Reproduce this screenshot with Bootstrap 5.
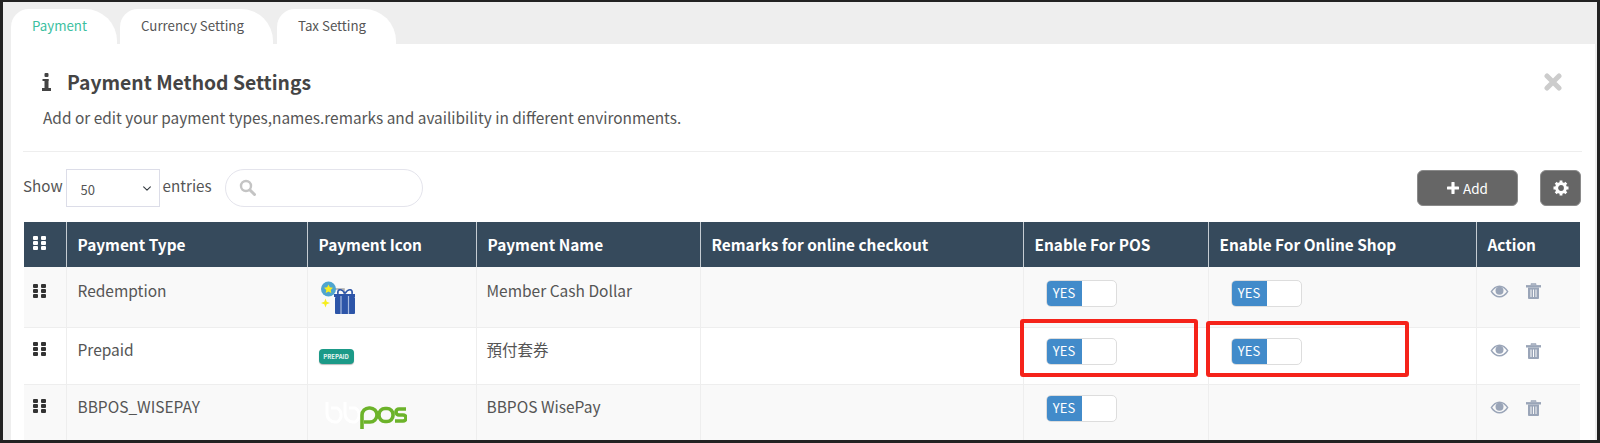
<!doctype html>
<html lang="en">
<head>
<meta charset="utf-8">
<title>Payment Method Settings</title>
<link rel="stylesheet" href="https://cdn.jsdelivr.net/npm/bootstrap@5.3.0/dist/css/bootstrap.min.css">
<style>
html,body{height:443px;overflow:hidden}
body{font-family:"Noto Sans CJK TC","Noto Sans",sans-serif;color:#555;background:#222;font-size:15px}
.shot{position:relative;height:443px;width:1600px;border-style:solid;border-color:#222;border-width:2px 3px 3px 3px;background:#eee;padding:0 2px 0 8px}
.tabstrip{height:42px;padding-top:7px;gap:3px;flex-wrap:nowrap}
.tabstrip .nav-link{height:35px;background:#fff;color:#555;font-size:13.3px;line-height:20px;padding:7px 0 0 21px;border-radius:18px 32px 0 0}
.tabstrip .nav-link.active{color:#3cbf9f}
.tab-a{width:106px}.tab-b{width:153px;margin-left:0}.tab-c{width:119px;margin-left:1px}
.panel-body{background:#fff;height:396px;padding:0 13px;overflow:hidden}
.head-block{padding:24px 0 0 19px;position:relative}
.head-title{font-size:19.3px;line-height:28px;font-weight:700;color:#444;margin:0 0 0 24px}
.head-desc{font-size:15.4px;line-height:24px;margin:9px 0 0 0;color:#555}
.info-ico{position:absolute;left:18px;top:29px}
.close-ico{position:absolute;right:20px;top:29px}
.head-rule{margin:22px 0 0 -1px;border:0;border-top:1px solid #eee;opacity:1}
.control-row{height:38px;margin-top:17px;margin-left:-1px}
.show-word{font-size:15.2px;color:#555;line-height:33px;align-self:flex-start}
.size-pick{width:94px;height:38px;margin:0 3px 0 3px;font-size:13px;padding:6px 20px 2px 14px;border:1px solid #dcdde8;border-radius:0;color:#555;background-position:right 6px center;background-size:12px 9px}
.search-wrap{position:relative;width:198px;margin-left:13px}
.search-box{height:38px;border:1.5px solid #e4e4ec;border-radius:19px}
.search-ico{position:absolute;left:14px;top:10px}
.act-btn{background:#666;border:1px solid #8a8a8a;border-radius:6px;color:#fff;height:36px;font-size:13.5px;line-height:20px;padding:0}
.act-add{width:101px}
.act-gear{width:41px;margin-left:22px;margin-right:1px}
.pay-table{table-layout:fixed;width:1556px;margin:15px 0 0 0;border-collapse:collapse;color:#555}
.pay-table th{background:#364a5c;color:#fff;font-size:15.4px;font-weight:700;height:45px;padding:0 10px 2px 11px;border:0;border-right:1px solid #c5ccd2;vertical-align:middle;line-height:20px}
.pay-table th:last-child{border-right:0}
.pay-table td{padding:10px 10px 0;vertical-align:top;font-size:15.5px;line-height:22px;border:0;border-right:1px solid #eee;border-bottom:1px solid #eee;color:#555;background:#fff;box-shadow:none}
.pay-table td:last-child{border-right:0}
.pay-table tr.tone td{background:#f9f9f9}
.pay-table tr.r1 td{padding-top:12px;height:60px}
.pay-table tr.r2 td{height:57px}
.pay-table tr.r3 td{height:57px}
.pay-table td.c-type{padding-left:11px}
.c0{width:42px}.c1{width:241px}.c2{width:169px}.c3{width:224px}.c4{width:323px}.c5{width:185px}.c6{width:268px}.c7{width:104px}
.grip{display:block;margin-top:4px}
.r1 .grip{margin-top:5px}
th .grip{margin:-1px 0 0}
.pay-table td.c-grip{padding-left:9px}
.pay-table th.c-grip{padding-left:9px}
.sw{display:flex;width:71px;height:27px;margin-left:12px;border:1.5px solid #ddd;border-radius:5px;background:#fff;overflow:hidden}
.r1 .sw{margin-top:1px}
.sw span{width:35px;background:#428bca;color:#fff;font-size:13px;line-height:25px;text-align:center;margin:-1px 0}
.acts{display:flex;align-items:center;gap:17px;margin:5px 0 0 3px;height:16px}
.r1 .acts{margin-top:4px}
.pic-gift{display:block;margin:2px 0 0 2px}
.pic-pre{display:flex;align-items:center;justify-content:center;width:35px;height:15px;margin:11px 0 0 1px;background:#1b9a88;border-radius:4px;color:#e8f6f3;font-size:6px;font-weight:700;line-height:15px;box-shadow:0 1px 1px #bbb}
.pic-bb{display:block;margin:7px 0 0 7px}
.mark-box{position:absolute;border:4px solid #f5231a;border-radius:3px;pointer-events:none}
.mb-1{left:1017px;top:317px;width:178px;height:58px}
.mb-2{left:1203px;top:319px;width:203px;height:56px}
</style>
</head>
<body>
<div class="shot">
  <ul class="nav tabstrip">
    <li class="nav-item"><a class="nav-link active tab-a" href="#">Payment</a></li>
    <li class="nav-item"><a class="nav-link tab-b" href="#">Currency Setting</a></li>
    <li class="nav-item"><a class="nav-link tab-c" href="#">Tax Setting</a></li>
  </ul>
  <div class="panel-body">
    <div class="head-block">
      <svg class="info-ico" width="9" height="18" viewBox="0 0 9 18" aria-hidden="true"><g fill="#444"><rect x="2.5" y="0" width="4" height="4" rx="1"/><rect x="0.5" y="6" width="6" height="2"/><rect x="2.5" y="6" width="4" height="10"/><rect x="0" y="15" width="9" height="3"/></g></svg>
      <h2 class="head-title">Payment Method Settings</h2>
      <svg class="close-ico" width="18" height="18" viewBox="0 0 18 18" aria-label="Close"><path d="M3 3L15 15M15 3L3 15" stroke="#ccc" stroke-width="5" stroke-linecap="round"/></svg>
      <p class="head-desc">Add or edit your payment types,names.remarks and availibility in different environments.</p>
    </div>
    <hr class="head-rule">
    <div class="d-flex align-items-center control-row">
      <span class="show-word">Show</span>
      <select class="form-select size-pick" aria-label="Entries"><option>50</option></select>
      <span class="show-word">entries</span>
      <div class="search-wrap">
        <input class="form-control search-box" type="text" aria-label="Search">
        <svg class="search-ico" width="17" height="17" viewBox="0 0 17 17" aria-hidden="true"><circle cx="7" cy="7" r="5" fill="none" stroke="#c4c4c4" stroke-width="2.4"/><path d="M11 11L15.500 15.500" stroke="#c4c4c4" stroke-width="3" stroke-linecap="round"/></svg>
      </div>
      <button class="btn act-btn act-add ms-auto d-flex align-items-center justify-content-center gap-1" type="button">
        <svg width="12" height="12" viewBox="0 0 13 13" aria-hidden="true"><path d="M6.500 1V12M1 6.500H12" stroke="#fff" stroke-width="3.400" stroke-linecap="round"/></svg>Add</button>
      <button class="btn act-btn act-gear d-flex align-items-center justify-content-center" type="button" aria-label="Settings">
        <svg width="16" height="16" viewBox="0 0 16 16" aria-hidden="true"><circle cx="8" cy="8" r="4.400" fill="none" stroke="#fff" stroke-width="3"/><g stroke="#fff" stroke-width="2.800"><path d="M8 0.500V3M8 13V15.500M0.500 8H3M13 8H15.500M2.700 2.700L4.500 4.500M11.500 11.500L13.300 13.300M13.300 2.700L11.500 4.500M4.500 11.500L2.700 13.300"/></g></svg></button>
    </div>
    <table class="table pay-table">
      <colgroup><col class="c0"><col class="c1"><col class="c2"><col class="c3"><col class="c4"><col class="c5"><col class="c6"><col class="c7"></colgroup>
      <thead>
        <tr>
          <th class="c-grip"><svg class="grip" width="13" height="14" viewBox="0 0 13 14" aria-hidden="true"><g fill="#fff"><rect width="5" height="4" rx="1"/><rect x="8" width="5" height="4" rx="1"/><rect y="5" width="5" height="4" rx="1"/><rect x="8" y="5" width="5" height="4" rx="1"/><rect y="10" width="5" height="4" rx="1"/><rect x="8" y="10" width="5" height="4" rx="1"/></g></svg></th>
          <th>Payment Type</th><th>Payment Icon</th><th>Payment Name</th><th>Remarks for online checkout</th><th>Enable For POS</th><th>Enable For Online Shop</th><th>Action</th>
        </tr>
      </thead>
      <tbody>
        <tr class="tone r1">
          <td class="c-grip"><svg class="grip" width="13" height="14" viewBox="0 0 13 14" aria-hidden="true"><g fill="#333"><rect width="5" height="4" rx="1"/><rect x="8" width="5" height="4" rx="1"/><rect y="5" width="5" height="4" rx="1"/><rect x="8" y="5" width="5" height="4" rx="1"/><rect y="10" width="5" height="4" rx="1"/><rect x="8" y="10" width="5" height="4" rx="1"/></g></svg></td>
          <td class="c-type">Redemption</td>
          <td><svg class="pic-gift" width="36" height="34" viewBox="0 0 36 34" aria-hidden="true"><path d="M15 8H24V13" fill="none" stroke="#aaa" stroke-width="1.500"/><circle cx="8.500" cy="8" r="7.500" fill="#4fa5cf"/><path d="M8.500 3.400l1.400 2.900 3.100.4-2.300 2.200.6 3.100-2.800-1.500-2.800 1.500.6-3.100-2.300-2.200 3.100-.4z" fill="#f7ee1e"/><path d="M5.500 17.500l1.200 3.300 3.300 1.200-3.300 1.200-1.200 3.300-1.200-3.300-3.300-1.200 3.300-1.200z" fill="#f7ee1e"/><rect x="15" y="16" width="20" height="17" rx="1" fill="#2d55a8"/><rect x="14" y="13" width="21" height="3" fill="#2d55a8"/><path d="M21 15V33M28.500 15V33" stroke="#a9bce0" stroke-width="1.200"/><path d="M25 12.500C21 6.500 17 8.500 18 13M25 12.500C29 6.500 33 8.500 32 13" fill="none" stroke="#2d55a8" stroke-width="1.600"/></svg></td>
          <td>Member Cash Dollar</td>
          <td></td>
          <td><div class="sw"><span>YES</span></div></td>
          <td><div class="sw"><span>YES</span></div></td>
          <td><div class="acts"><svg width="19" height="13" viewBox="0 0 19 13" aria-label="View"><path d="M0.500 6.500C3 2.500 6 .5 9.500 .5s6.500 2 9 6c-2.500 4-5.500 6-9 6s-6.500-2-9-6z" fill="#9aa5b8"/><path d="M2.200 6.500C4.200 3.800 6.500 2 9.500 2s5.300 1.800 7.300 4.500c-2 2.700-4.300 4.500-7.300 4.500s-5.300-1.800-7.300-4.500z" fill="#f9f9f9"/><circle cx="9.500" cy="5.800" r="4" fill="#9aa5b8"/></svg><svg width="15" height="16" viewBox="0 0 15 16" aria-label="Delete"><path d="M5 1.800V.7h5v1.100M0 2.500h15v1.600H0z" fill="#9aa5b8" stroke="#9aa5b8" stroke-width=".8"/><path d="M2 4.500V15c0 .5.500 1 1 1h9c.5 0 1-.5 1-1V4.500z" fill="#9aa5b8"/><path d="M5 6.500V14M7.500 6.500V14M10 6.500V14" stroke="#f9f9f9" stroke-width="1"/></svg></div></td>
        </tr>
        <tr class="r2">
          <td class="c-grip"><svg class="grip" width="13" height="14" viewBox="0 0 13 14" aria-hidden="true"><g fill="#333"><rect width="5" height="4" rx="1"/><rect x="8" width="5" height="4" rx="1"/><rect y="5" width="5" height="4" rx="1"/><rect x="8" y="5" width="5" height="4" rx="1"/><rect y="10" width="5" height="4" rx="1"/><rect x="8" y="10" width="5" height="4" rx="1"/></g></svg></td>
          <td class="c-type">Prepaid</td>
          <td><div class="pic-pre">PREPAID</div></td>
          <td>預付套券</td>
          <td></td>
          <td><div class="sw"><span>YES</span></div></td>
          <td><div class="sw"><span>YES</span></div></td>
          <td><div class="acts"><svg width="19" height="13" viewBox="0 0 19 13" aria-label="View"><path d="M0.500 6.500C3 2.500 6 .5 9.500 .5s6.500 2 9 6c-2.500 4-5.500 6-9 6s-6.500-2-9-6z" fill="#9aa5b8"/><path d="M2.200 6.500C4.200 3.800 6.500 2 9.500 2s5.300 1.800 7.300 4.500c-2 2.700-4.300 4.500-7.300 4.500s-5.300-1.800-7.300-4.500z" fill="#fff"/><circle cx="9.500" cy="5.800" r="4" fill="#9aa5b8"/></svg><svg width="15" height="16" viewBox="0 0 15 16" aria-label="Delete"><path d="M5 1.800V.7h5v1.100M0 2.500h15v1.600H0z" fill="#9aa5b8" stroke="#9aa5b8" stroke-width=".8"/><path d="M2 4.500V15c0 .5.500 1 1 1h9c.5 0 1-.5 1-1V4.500z" fill="#9aa5b8"/><path d="M5 6.500V14M7.500 6.500V14M10 6.500V14" stroke="#fff" stroke-width="1"/></svg></div></td>
        </tr>
        <tr class="tone r3">
          <td class="c-grip"><svg class="grip" width="13" height="14" viewBox="0 0 13 14" aria-hidden="true"><g fill="#333"><rect width="5" height="4" rx="1"/><rect x="8" width="5" height="4" rx="1"/><rect y="5" width="5" height="4" rx="1"/><rect x="8" y="5" width="5" height="4" rx="1"/><rect y="10" width="5" height="4" rx="1"/><rect x="8" y="10" width="5" height="4" rx="1"/></g></svg></td>
          <td class="c-type">BBPOS_WISEPAY</td>
          <td><svg class="pic-bb" width="82" height="28" viewBox="0 0 82 28" aria-label="bbpos logo"><g fill="none" stroke="#fff" stroke-width="3"><path d="M2 0V12a8 8 0 0 0 8 8h2a8 8 0 0 0 0-14h-6"/><path d="M20 0V12a8 8 0 0 0 8 8h2a8 8 0 0 0 0-14h-6"/></g><g fill="none" stroke="#6cb32a" stroke-width="3.600"><path d="M37 27V13a7 7 0 0 1 7-7h1a7 7 0 0 1 0 14h-6"/><rect x="54" y="6.500" width="14" height="13" rx="6"/><path d="M81 7H74a3 3 0 0 0 0 6h4a3 3 0 0 1 0 6H70"/></g></svg></td>
          <td>BBPOS WisePay</td>
          <td></td>
          <td><div class="sw"><span>YES</span></div></td>
          <td></td>
          <td><div class="acts"><svg width="19" height="13" viewBox="0 0 19 13" aria-label="View"><path d="M0.500 6.500C3 2.500 6 .5 9.500 .5s6.500 2 9 6c-2.500 4-5.500 6-9 6s-6.500-2-9-6z" fill="#9aa5b8"/><path d="M2.200 6.500C4.200 3.800 6.500 2 9.500 2s5.300 1.800 7.300 4.500c-2 2.700-4.300 4.500-7.300 4.500s-5.300-1.800-7.300-4.500z" fill="#f9f9f9"/><circle cx="9.500" cy="5.800" r="4" fill="#9aa5b8"/></svg><svg width="15" height="16" viewBox="0 0 15 16" aria-label="Delete"><path d="M5 1.800V.7h5v1.100M0 2.500h15v1.600H0z" fill="#9aa5b8" stroke="#9aa5b8" stroke-width=".8"/><path d="M2 4.500V15c0 .5.500 1 1 1h9c.5 0 1-.5 1-1V4.500z" fill="#9aa5b8"/><path d="M5 6.500V14M7.500 6.500V14M10 6.500V14" stroke="#f9f9f9" stroke-width="1"/></svg></div></td>
        </tr>
      </tbody>
    </table>
  </div>
  <div class="mark-box mb-1"></div>
  <div class="mark-box mb-2"></div>
</div>
<script src="https://cdn.jsdelivr.net/npm/bootstrap@5.3.0/dist/js/bootstrap.bundle.min.js"></script>
</body>
</html>
